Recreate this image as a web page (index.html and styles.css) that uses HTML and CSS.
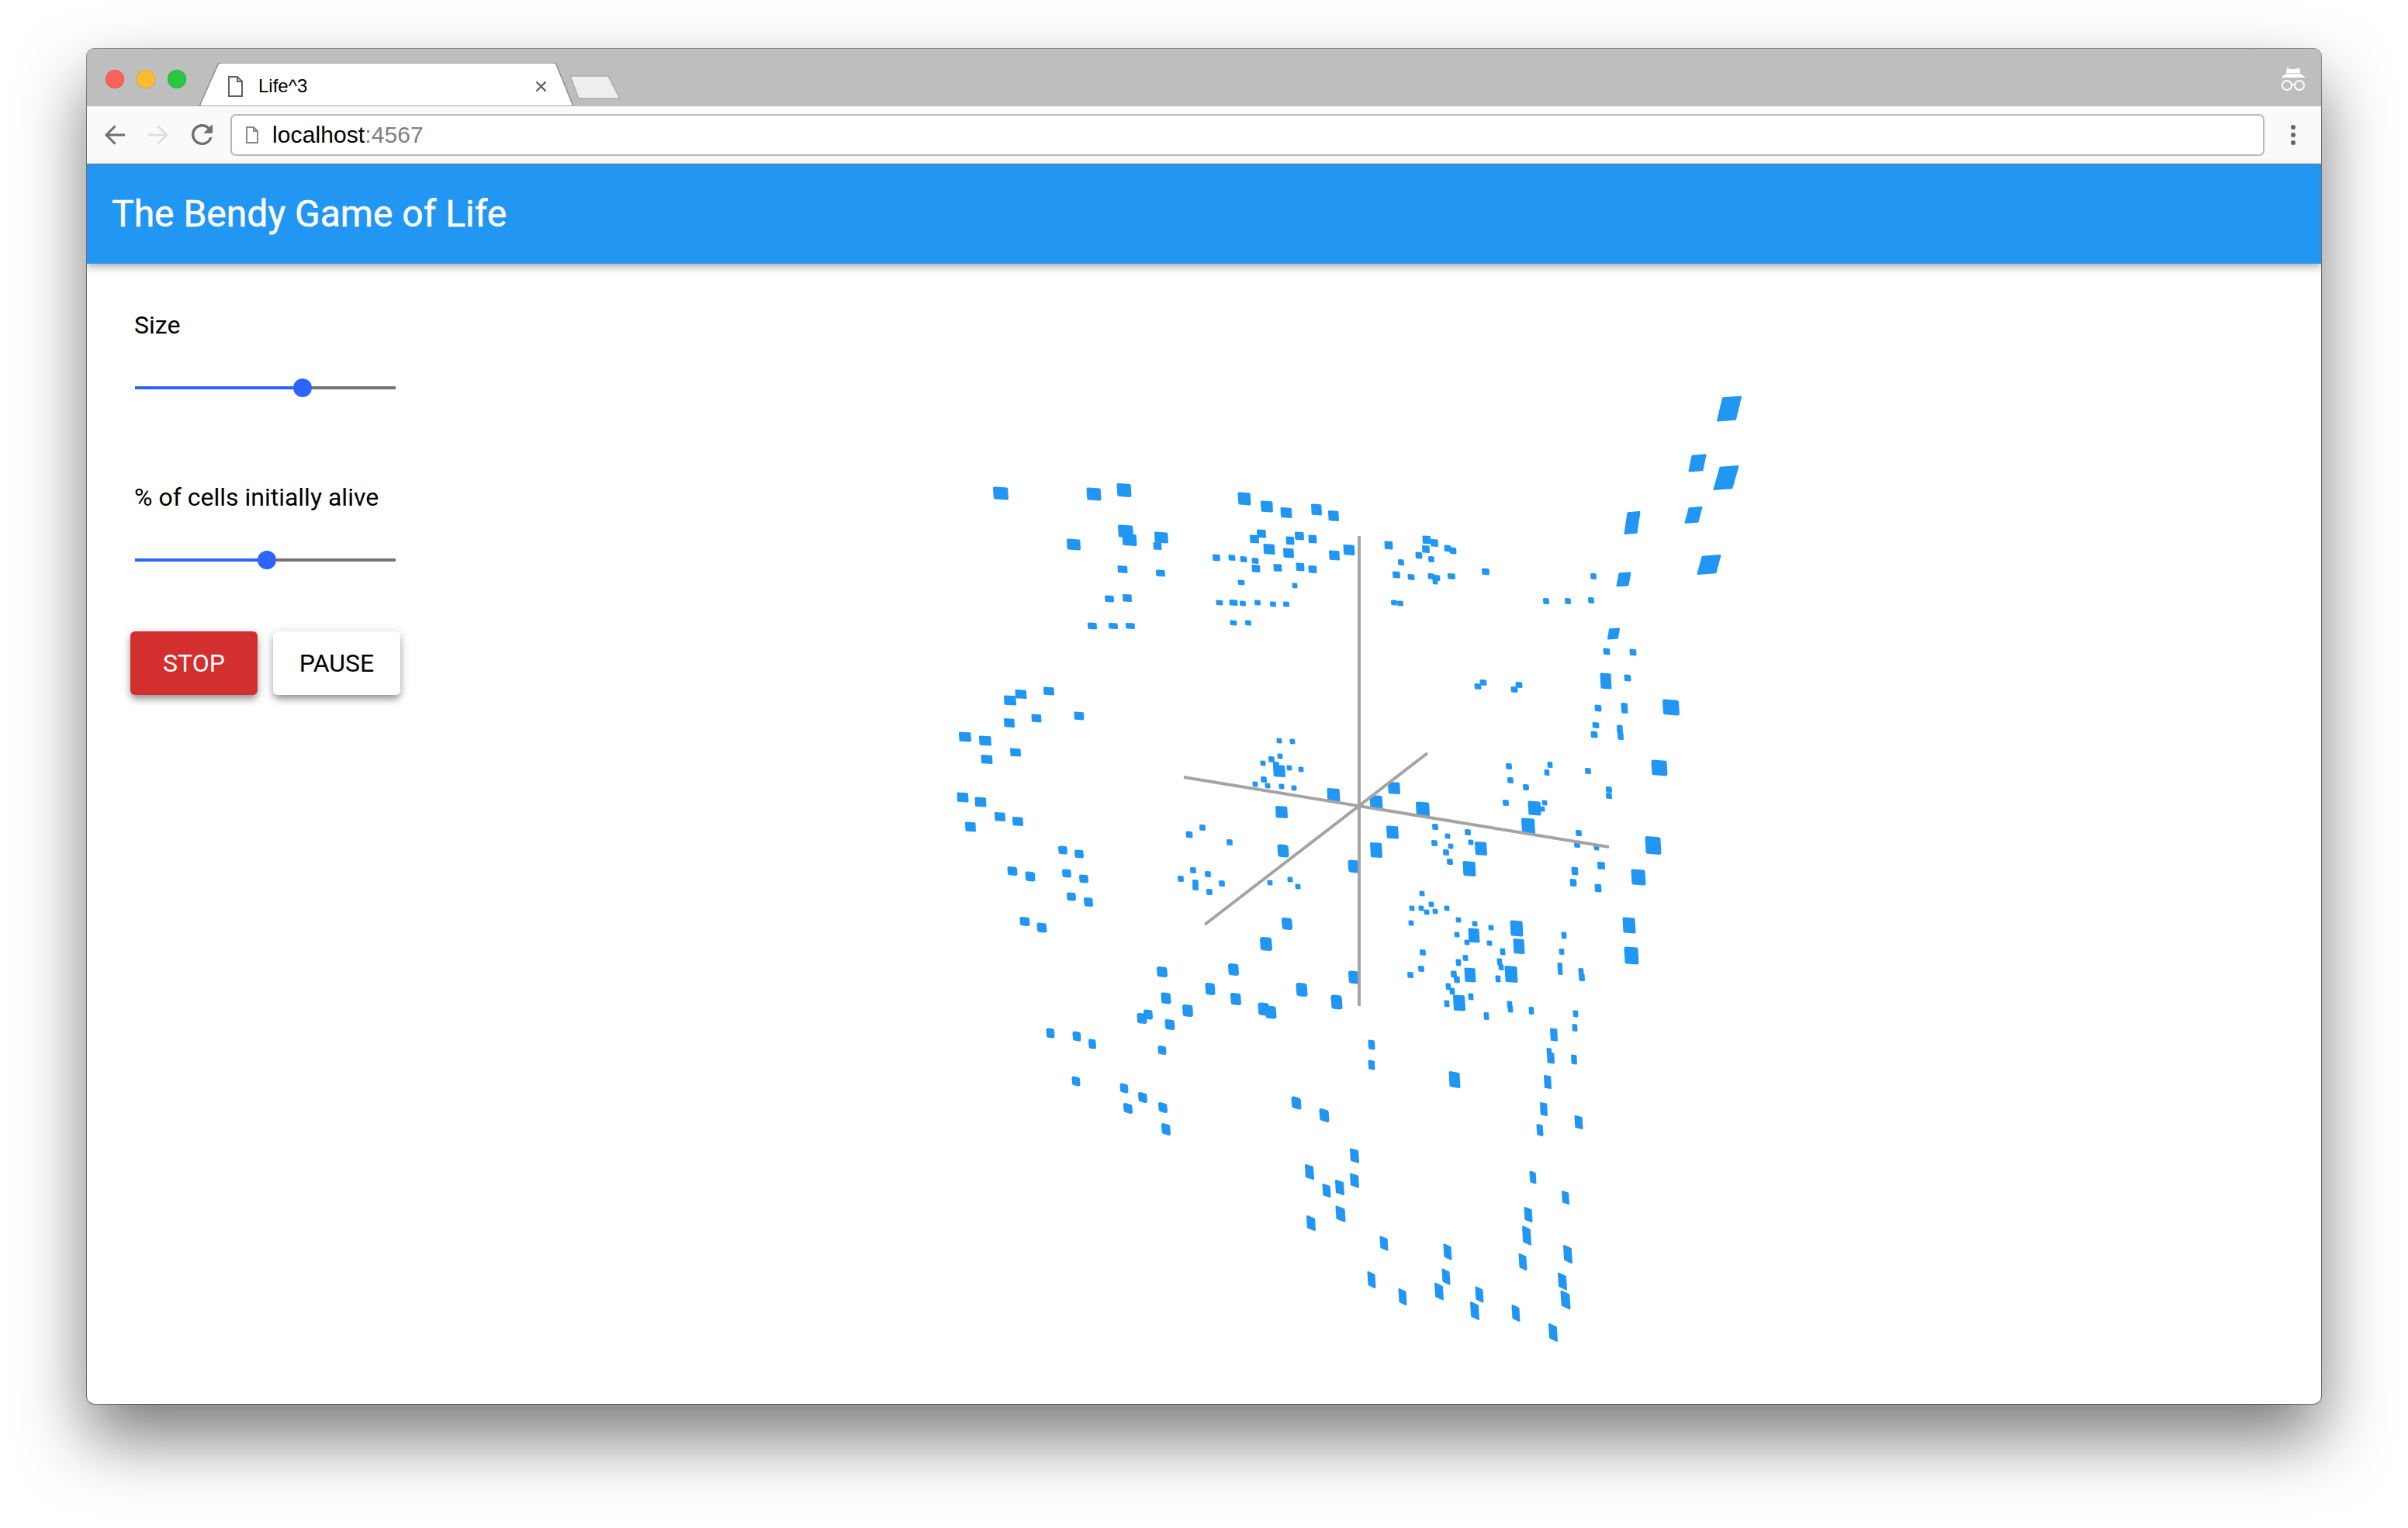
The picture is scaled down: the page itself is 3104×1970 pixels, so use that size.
FILE: index.html
```html
<!DOCTYPE html>
<html lang="en">
<head>
  <meta charset="UTF-8" />
  <title>Life^3</title>
  <link rel="stylesheet" href="styles.css">
</head>
<body>

  <div class="window">
    <div class="tabstrip">
      <div class="lights">
        <span class="light red"></span>
        <span class="light yellow"></span>
        <span class="light green"></span>
      </div>
      <div class="tab">
        <svg class="tab-shape" width="482" height="56" viewBox="0 0 482 56">
          <path d="M0 56 L24 2 Q25 0 28 0 H456 Q459 0 460 2 L482 56 Z" fill="#fff" stroke="#8c8c8c" stroke-width="1.5" />
        </svg>
        <svg class="page-icon" width="19" height="27" viewBox="0 0 19 27">
          <path d="M1 1 H12 L18 7 V26 H1 Z M12 1 V7 H18" fill="none" stroke="#5f5f5f" stroke-width="2" />
        </svg>
        <span class="tab-title">Life^3</span>
        <svg class="tab-close" width="15" height="15" viewBox="0 0 15 15">
          <path d="M1.5 1.5 L13.5 13.5 M13.5 1.5 L1.5 13.5" stroke="#555" stroke-width="2" />
        </svg>
      </div>
      <svg class="new-tab" width="66" height="31" viewBox="0 0 66 31">
        <path d="M1 1 H50 L65 30 H12 Z" fill="#eee" stroke="#aaa" stroke-width="1.5" stroke-linejoin="round" />
      </svg>
      <svg class="incognito" width="34" height="32" viewBox="0 0 34 32">
        <path d="M9 1 L13 3 H21 L25 1 L26 8 H8 Z" fill="#fff" />
        <path d="M1 14 L8 9 H26 L33 14 Z" fill="#fff" />
        <circle cx="9" cy="24" r="6" fill="none" stroke="#fff" stroke-width="2" />
        <circle cx="25" cy="24" r="6" fill="none" stroke="#fff" stroke-width="2" />
        <path d="M15 23 H19" stroke="#fff" stroke-width="2" />
      </svg>
    </div>

    <div class="toolbar">
      <svg class="nav-icon" width="26" height="26" viewBox="0 0 26 26">
        <path d="M26 13 H3 M13.5 1.5 L2 13 L13.5 24.5" fill="none" stroke="#6e6e6e" stroke-width="3" />
      </svg>
      <svg class="nav-icon" width="26" height="26" viewBox="0 0 26 26">
        <path d="M0 13 H23 M12.5 1.5 L24 13 L12.5 24.5" fill="none" stroke="#dedede" stroke-width="3" />
      </svg>
      <svg class="nav-icon" width="27" height="27" viewBox="4 4 16 16">
        <path d="M17.65 6.35A7.958 7.958 0 0012 4c-4.42 0-7.99 3.58-7.99 8s3.57 8 7.99 8c3.73 0 6.84-2.55 7.73-6h-2.08A5.99 5.99 0 0112 18c-3.31 0-6-2.69-6-6s2.69-6 6-6c1.66 0 3.14.69 4.22 1.78L13 11h7V4l-2.35 2.35z" fill="#6e6e6e" />
      </svg>
      <div class="address">
        <svg class="address-icon" width="16" height="22" viewBox="0 0 16 22">
          <path d="M1 1 H10 L15 6 V21 H1 Z M10 1 V6 H15" fill="none" stroke="#8a8a8a" stroke-width="2" />
        </svg>
        <span class="host">localhost</span><span class="port">:4567</span>
      </div>
      <div class="menu">
        <span></span>
        <span></span>
        <span></span>
      </div>
    </div>

    <header class="appbar">The Bendy Game of Life</header>

    <main class="content">
      <aside class="controls">
        <div class="control-label">Size</div>
        <div class="slider">
          <div class="slider-fill" style="width: 64.3%"></div>
          <div class="slider-thumb" style="left: 64.3%"></div>
        </div>

        <div class="control-label second">% of cells initially alive</div>
        <div class="slider">
          <div class="slider-fill" style="width: 50.6%"></div>
          <div class="slider-thumb" style="left: 50.6%"></div>
        </div>

        <div class="buttons">
          <button class="btn btn-stop">STOP</button>
          <button class="btn btn-pause">PAUSE</button>
        </div>
      </aside>

      <div class="stage">
        <svg id="world" class="world" viewBox="612 340 2380 1470"></svg>
      </div>
    </main>
  </div>

  <script src="cells.js"></script>
</body>
</html>
```

FILE: styles.css
```css
html, body {
  margin: 0;
  height: 1970px;
  overflow: hidden;
  background-color: #fff;
}

body {
  font-family: Roboto, 'Liberation Sans', sans-serif;
  color: #000;
}

.window {
  display: flex;
  flex-direction: column;
  width: 2880px;
  height: 1747px;
  margin: 63px 0 0 112px;
  background: #fff;
  border-radius: 10px;
  overflow: hidden;
  box-shadow: 0 0 0 1px rgba(0, 0, 0, 0.42), 0 44px 88px rgba(0, 0, 0, 0.52);
}

/* tab strip */
.tabstrip {
  display: flex;
  flex: none;
  height: 74px;
  padding-left: 24px;
  background-color: #bebebe;
}

.lights {
  display: flex;
  gap: 16px;
  margin-top: 27px;
}

.light {
  width: 24px;
  height: 24px;
  border-radius: 50%;
  box-sizing: border-box;
  border: 1px solid rgba(0, 0, 0, 0.12);
}

.red { background-color: #ff6159; }
.yellow { background-color: #ffbd2e; }
.green { background-color: #28c941; }

.tab {
  position: relative;
  display: flex;
  align-items: center;
  box-sizing: border-box;
  width: 482px;
  height: 56px;
  margin: 18px 0 0 17px;
  padding: 4px 34px 0 37px;
}

.tab-shape {
  position: absolute;
  top: 0;
  left: 0;
}

.page-icon, .tab-title, .tab-close {
  position: relative;
}

.tab-title {
  margin-left: 20px;
  font-family: 'Liberation Sans', sans-serif;
  font-size: 24px;
}

.tab-close {
  margin-left: auto;
}

.new-tab {
  flex: none;
  margin: 34px 0 0 -5px;
}

.incognito {
  flex: none;
  margin: 23px 19px 0 auto;
}

/* address bar */
.toolbar {
  display: flex;
  flex: none;
  align-items: center;
  box-sizing: border-box;
  height: 75px;
  padding-left: 23px;
  padding-bottom: 1px;
  gap: 30px;
  background-color: #fafafa;
  border-bottom: 1px solid #777;
}

.address {
  display: flex;
  flex: 1;
  align-items: center;
  box-sizing: border-box;
  height: 54px;
  margin-left: -7px;
  padding: 1px 0 0 18px;
  background: #fff;
  border: 2px solid #b8b8b8;
  border-radius: 7px;
  font-family: 'Liberation Sans', sans-serif;
  font-size: 30px;
  letter-spacing: 0.1px;
}

.address-icon {
  margin-right: 18px;
}

.port {
  color: #808080;
}

.menu {
  display: flex;
  flex-direction: column;
  align-items: center;
  gap: 4px;
  width: 73px;
  margin-left: -30px;
}

.menu span {
  width: 6px;
  height: 6px;
  border-radius: 50%;
  background-color: #666;
}

/* app */
.appbar {
  position: relative;
  flex: none;
  box-sizing: border-box;
  height: 128px;
  padding-left: 32px;
  background-color: #2196f3;
  color: #fff;
  font-size: 48px;
  font-weight: 400;
  line-height: 128px;
  -webkit-text-stroke: 0.5px #fff;
  box-shadow: 0 4px 10px rgba(0, 0, 0, 0.32);
}

.content {
  display: flex;
  flex: 1;
  min-height: 0;
}

.controls {
  flex: none;
  box-sizing: border-box;
  width: 500px;
  padding: 59px 0 0 61px;
}

.control-label {
  font-size: 32px;
  line-height: 40px;
}

.control-label.second {
  margin-top: 119px;
}

.slider {
  position: relative;
  width: 336px;
  height: 4px;
  margin: 59px 0 10px 1px;
  background-color: #757575;
}

.slider-fill {
  height: 100%;
  background-color: #2d64fb;
}

.slider-thumb {
  position: absolute;
  top: -10px;
  width: 24px;
  height: 24px;
  margin-left: -12px;
  border-radius: 50%;
  background-color: #2d64fb;
}

.buttons {
  display: flex;
  gap: 20px;
  margin: 90px 0 0 -5px;
}

.btn {
  width: 164px;
  height: 82px;
  border: none;
  border-radius: 6px;
  font-family: Roboto, sans-serif;
  font-size: 32px;
  font-weight: 400;
  box-shadow: 0 6px 10px -1px rgba(0, 0, 0, 0.36), 0 2px 16px rgba(0, 0, 0, 0.14);
}

.btn-stop {
  background-color: #d32f2f;
  color: #fff;
}

.btn-pause {
  background-color: #fff;
  color: #000;
}

.stage {
  flex: 1;
  min-width: 0;
}

.world {
  display: block;
  width: 100%;
  height: 100%;
  filter: blur(0.7px);
}

.cell {
  fill: #2196f3;
  stroke: #2196f3;
  stroke-linejoin: round;
}

.axis {
  stroke: #a4a4a4;
  stroke-width: 4;
}
```

FILE: cells.js
```js
// live cells in page pixels: [x, y, width, height]
const cells = [
  // back wall, left
  [1290,636,18,15],[1410,637,17,15],[1449,632,17,16],[1451,685,18,15],[1456,696,17,14],
  [1497,693,16,13],[1492,704,9,8],[1384,702,16,13],[1447,734,11,8],[1496,739,10,7],
  [1430,772,10,7],[1453,771,10,8],[1408,807,10,7],[1435,807,10,6],[1457,807,10,6],
  // back wall, middle
  [1604,643,15,15],[1633,653,14,13],[1658,661,13,12],[1697,657,12,13],[1719,665,12,12],
  [1626,688,10,9],[1617,695,10,9],[1663,697,9,9],[1675,691,10,9],[1692,695,9,9],
  [1636,708,13,12],[1661,713,12,11],[1720,716,12,11],[1739,709,13,12],[1568,719,8,7],
  [1588,719,7,6],[1603,721,7,6],[1618,723,7,6],[1619,733,9,8],[1647,732,9,8],
  [1676,731,9,9],[1692,734,9,8],[1600,751,7,5],[1669,755,5,5],[1572,777,7,5],
  [1590,777,9,6],[1602,778,6,5],[1621,777,6,5],[1641,779,6,5],[1658,779,6,5],
  [1590,803,7,5],[1609,803,6,5],
  // back wall, right
  [1790,703,9,9],[1839,696,9,9],[1849,700,8,8],[1838,708,8,8],[1829,716,7,7],
  [1866,707,7,7],[1873,710,7,7],[1845,721,6,6],[1806,725,6,6],[1800,741,8,7],
  [1819,744,7,6],[1845,743,7,6],[1852,745,7,6],[1850,750,5,5],[1871,743,8,6],
  [1915,737,8,7],[1797,777,6,5],[1805,778,6,5],[1993,775,6,6],[2021,775,6,6],
  [2051,774,6,6],[2054,743,6,6],
  // left wall
  [1352,891,12,9],[1316,895,13,10],[1302,903,14,11],[1391,923,11,9],[1336,926,11,9],
  [1301,932,12,10],[1244,950,14,11],[1270,955,14,11],[1272,979,13,10],[1309,970,12,9],
  [1241,1028,13,11],[1264,1034,13,11],[1289,1053,12,10],[1312,1059,12,10],[1251,1066,12,11],
  [1370,1096,10,9],[1391,1101,10,9],[1305,1123,11,10],[1328,1130,11,11],[1375,1126,10,9],
  [1397,1133,10,9],[1381,1156,10,9],[1403,1163,10,10],[1321,1188,11,10],[1343,1196,11,11],
  // middle, around the axes
  [1649,955,5,5],[1666,956,5,5],[1650,975,5,5],[1639,979,6,6],[1628,984,5,5],
  [1649,994,14,14],[1645,986,6,6],[1662,990,5,5],[1677,992,5,5],[1629,1005,6,6],
  [1618,1011,5,5],[1634,1013,5,5],[1652,1014,5,5],[1668,1016,5,5],[1719,1025,15,16],
  [1774,1034,15,16],[1797,1016,14,14],[1652,1047,14,14],[1654,1097,13,15],[1795,1073,14,15],
  [1774,1096,14,18],[1745,1117,13,15],[1550,1067,6,6],[1533,1076,7,7],[1585,1086,6,6],
  [1538,1122,6,6],[1557,1127,6,6],[1522,1133,6,6],[1541,1138,6,6],[1541,1144,6,6],
  [1575,1139,6,6],[1559,1150,6,6],[1637,1138,5,5],[1663,1134,5,5],[1673,1143,5,5],
  // floor, front left
  [1659,1191,12,14],[1632,1217,14,16],[1498,1253,12,12],[1590,1250,12,14],[1745,1260,12,15],
  [1560,1275,11,14],[1678,1276,13,16],[1503,1287,11,13],[1593,1288,12,14],[1723,1292,13,17],
  [1531,1303,12,14],[1472,1313,11,12],[1480,1308,10,11],[1508,1321,11,12],[1629,1301,13,15],
  [1638,1305,13,15],[1354,1332,9,11],[1388,1336,9,11],[1408,1346,8,11],[1498,1354,9,10],
  [1387,1394,9,11],[1449,1403,9,11],[1473,1415,10,12],[1454,1429,10,12],[1499,1428,10,12],
  [1503,1456,10,14],[1671,1422,11,15],[1707,1438,11,16],[1768,1347,7,11],[1768,1373,7,11],
  // floor, front
  [1875,1392,13,20],[1746,1490,10,17],[1688,1511,10,18],[1746,1522,10,17],[1727,1531,10,18],
  [1710,1535,9,16],[1728,1565,11,19],[1690,1577,10,18],[1784,1603,9,17],[1866,1614,9,19],
  [1963,1627,9,20],[2021,1617,10,22],[1968,1593,10,23],[1768,1650,9,20],[1864,1646,9,19],
  [1855,1665,10,21],[2014,1652,10,21],[2018,1676,11,23],[1907,1669,9,19],[1808,1672,9,20],
  [1901,1690,10,22],[1954,1693,9,20],[2002,1718,10,22],[1976,1518,7,15],[2018,1544,8,16],
  [1970,1566,9,18],[1985,1457,7,14],[1990,1430,8,16],[1995,1395,8,16],[2035,1447,9,16],
  [1999,1364,8,13],[1997,1356,5,8],[2029,1366,6,11],[2003,1334,8,15],
  // right wall, upper
  [2229,527,30,31,7],[2188,597,21,21,4],[2225,616,31,30,8],[2183,664,21,20,5],
  [2104,674,19,28,4],[2203,728,29,24,6],[2093,747,17,17,3],[2080,817,14,13,2],
  [2071,840,7,7],[2105,841,7,7],[2070,878,13,19],[2098,874,7,7],[2154,912,20,19],
  [2060,913,7,7],[2094,913,7,12],[2057,935,7,6],[2055,947,7,7],[2088,940,6,9],
  [2089,949,6,8],[1905,885,7,6],[1912,880,7,6],[1952,889,7,6],[1958,883,7,6],
  // right wall, middle
  [2139,990,19,19],[1945,988,6,6],[1998,986,5,6],[1994,996,5,6],[2047,994,6,6],
  [1947,1006,6,6],[1967,1015,6,6],[2074,1018,6,6],[2074,1026,6,6],[1941,1035,6,6],
  [1978,1042,15,17],[1991,1035,5,5],[1988,1043,5,5],[1970,1065,16,19],[1834,1043,16,17],
  [1850,1066,6,6],[1866,1078,5,5],[1892,1073,6,6],[1849,1087,6,6],[1870,1091,5,5],
  [1896,1086,5,5],[1909,1094,14,16],[1864,1099,6,6],[1869,1111,6,6],[1894,1120,15,18],
  [2035,1074,6,6],[2033,1089,6,6],[2058,1093,5,5],[2064,1116,8,8],[2030,1123,7,9],
  [2028,1138,7,8],[2060,1145,7,9],[2131,1090,19,22],[2112,1131,17,19],[2100,1193,15,19],
  [2103,1232,17,21],
  // right wall, lower
  [1833,1152,5,5],[1820,1171,5,5],[1832,1171,5,5],[1845,1166,5,5],[1839,1176,5,5],
  [1850,1175,5,5],[1865,1171,5,5],[1819,1190,5,5],[1880,1186,5,5],[1901,1191,5,5],
  [1922,1196,5,5],[1878,1205,5,5],[1900,1206,13,17],[1891,1215,5,5],[1920,1216,5,5],
  [1955,1197,15,19],[1958,1220,13,18],[1937,1227,5,7],[2016,1206,5,7],[2013,1227,5,6],
  [1834,1228,6,6],[1889,1235,5,6],[1880,1241,5,7],[1933,1240,5,7],[1935,1247,5,6],
  [1832,1249,6,6],[1818,1257,6,6],[1874,1256,6,7],[1878,1263,6,7],[1895,1257,13,17],
  [1948,1256,15,20],[1931,1262,5,7],[2011,1249,5,14],[2038,1252,5,6],[2039,1260,6,8],
  [1867,1272,5,7],[1872,1278,5,7],[1881,1293,14,19],[1865,1294,5,7],[1896,1285,5,7],
  [1946,1295,5,7],[1947,1301,5,7],[1916,1310,5,8],[1974,1303,5,8],[2031,1307,5,7],
  [2030,1325,5,8]
];

const axes = [
  [1752, 691, 1752, 1297],
  [1526, 1002, 2074, 1092],
  [1553, 1192, 1840, 971]
];

const world = document.getElementById("world");
const NS = "http://www.w3.org/2000/svg";

// how far the top edge slopes, depends on where the cell sits in the cube
function tilt(y) {
  return 0.06 + 0.35 * Math.max(0, Math.min(1, (y - 1300) / 350));
}

// tiny cells and the ones on the near left look round, the rest only a bit soft
function softness(x, y, w, h, lean) {
  if (lean !== undefined) return 2;
  const small = Math.min(w, h);
  if (small <= 7) return small * 0.5;
  if (x < 1760 && y > 1080 && y < 1470) return small * 0.5;
  return small * 0.25;
}

cells.forEach(c => {
  const [x, y, w, h, lean] = c;
  const dx = (lean !== undefined ? lean : -0.05 * h) / 2;
  const dy = lean !== undefined ? -0.03 * w : tilt(y) * w / 2;
  const soft = softness(x, y, w, h, lean);
  const iw = w - 2 * Math.abs(dx) - soft + 2;
  const ih = h - 2 * Math.abs(dy) - soft + 2;

  const poly = document.createElementNS(NS, "polygon");
  poly.setAttribute("class", "cell");
  poly.setAttribute("stroke-width", soft);
  poly.setAttribute("points", [
    [x - iw / 2 + dx, y - ih / 2 - dy],
    [x + iw / 2 + dx, y - ih / 2 + dy],
    [x + iw / 2 - dx, y + ih / 2 + dy],
    [x - iw / 2 - dx, y + ih / 2 - dy]
  ].map(p => p.join(",")).join(" "));
  world.appendChild(poly);
});

axes.forEach(a => {
  const line = document.createElementNS(NS, "line");
  line.setAttribute("class", "axis");
  line.setAttribute("x1", a[0]);
  line.setAttribute("y1", a[1]);
  line.setAttribute("x2", a[2]);
  line.setAttribute("y2", a[3]);
  world.appendChild(line);
});
```
